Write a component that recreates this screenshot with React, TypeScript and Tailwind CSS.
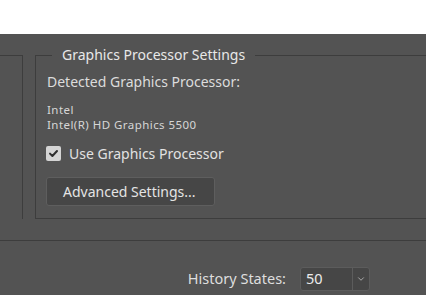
import { ChevronDown } from "lucide-react";

const font = { fontFamily: '"Noto Sans", "Open Sans", sans-serif' };

function CheckBox() {
  return (
    <span className="flex h-[15px] w-[15px] items-center justify-center rounded-[2px] bg-[#d4d4d4]">
      <svg width="11" height="11" viewBox="0 0 11 11" fill="none">
        <path
          d="M2 5.6 L4.4 8 L9 3"
          stroke="#2e2e2e"
          strokeWidth="2"
          strokeLinecap="round"
          strokeLinejoin="round"
        />
      </svg>
    </span>
  );
}

export default function App() {
  return (
    <div
      className="h-[295px] w-[426px] overflow-hidden bg-white text-[#e2e2e2]"
      style={font}
    >
      <div className="h-[34px] bg-white" />
      <div className="h-[261px] bg-[#535353] pt-[21px]">
        <div className="flex gap-[12px]">
          <div className="w-[23px] border-t border-r border-[#3d3d3d]" />
          <div className="-mr-[40px] flex-1 border-t border-b border-l border-[#3d3d3d] pb-[12px]">
            <div className="-mt-[11px] ml-[16px] w-fit bg-[#535353] px-[10px] text-[14px] leading-[20px] text-[#e8e8e8]">
              Graphics Processor Settings
            </div>
            <div className="pl-[10px]">
              <div className="mt-[7px] pl-px text-[14px] leading-[20px] text-[#dcdcdc]">
                Detected Graphics Processor:
              </div>
              <div className="mt-[10px] pl-px text-[11.5px] leading-[15px] tracking-[0.45px] text-[#d6d6d6]">
                <div className="h-[15px]">Intel</div>
                <div className="h-[15px]">Intel(R) HD Graphics 5500</div>
              </div>
              <label className="mt-[11px] flex h-[20px] items-center gap-[8px] text-[14px]">
                <CheckBox />
                <span>Use Graphics Processor</span>
              </label>
              <button className="mt-[14px] flex h-[29px] w-[169px] items-center rounded-[3px] border border-[#5e5e5e] bg-[#464646] pl-[16px] text-[14px] text-[#e4e4e4]">
                Advanced Settings...
              </button>
            </div>
          </div>
        </div>
        <div className="mt-[21px] border-t border-[#3d3d3d]" />
        <div className="mt-[26px] flex items-center justify-end gap-[14px] pr-[56px]">
          <span className="text-[14.5px] text-[#dedede]">History States:</span>
          <div className="flex h-[24px] w-[70px] rounded-[3px] border border-[#5c5c5c] bg-[#464646]">
            <div className="flex w-[51px] items-center pl-[5px] text-[14.5px] text-[#ececec]">
              50
            </div>
            <div className="flex flex-1 items-center justify-center border-l border-[#5c5c5c]">
              <ChevronDown size={10} strokeWidth={2} className="text-[#bdbdbd]" />
            </div>
          </div>
        </div>
      </div>
    </div>
  );
}
